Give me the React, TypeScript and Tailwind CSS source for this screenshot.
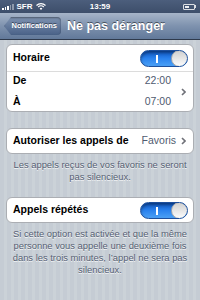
import React from "react";

function Toggle() {
  return (
    <div className="relative w-[48px] h-[17px] rounded-full border border-[#1d4f9c] bg-gradient-to-b from-[#0f56c0] via-[#2a82ee] to-[#4ba0f5] shadow-[inset_0_2px_3px_rgba(0,0,0,0.35)] overflow-hidden">
      <div className="absolute left-[15px] top-[4px] w-[2px] h-[8px] bg-white" />
      <div className="absolute right-[-1px] top-[-1px] w-[17px] h-[17px] rounded-full border border-[#a8a8a8] bg-gradient-to-b from-[#d0d0d0] to-[#fcfcfc]" />
    </div>
  );
}

function Chevron() {
  return (
    <svg width="5" height="8" viewBox="0 0 5 8" className="shrink-0">
      <path d="M1 1 L4 4 L1 7" fill="none" stroke="#6f7178" strokeWidth="1.6" />
    </svg>
  );
}

function Footer({ children }: { children: React.ReactNode }) {
  return (
    <p className="px-[12px] pt-[5px] text-center text-[9.4px] leading-[12px] text-[#565f73] [text-shadow:0_1px_0_rgba(255,255,255,0.8)]">
      {children}
    </p>
  );
}

export default function App() {
  return (
    <div className="w-[200px] h-[300px] overflow-hidden font-['Liberation_Sans',Arial,sans-serif] bg-[repeating-linear-gradient(90deg,#c5ccd4_0px,#c5ccd4_4px,#cbd2d8_4px,#cbd2d8_7px)]">
      {/* Status bar */}
      <div className="h-[13px] flex items-center justify-between px-[2px] bg-gradient-to-b from-[#4c5e7c] to-[#3d4e6a] text-white text-[8px] font-bold">
        <div className="flex items-center gap-[3px] w-[60px]">
          <div className="flex items-end gap-[1px] h-[6px]">
            <span className="w-[1.5px] h-[2px] bg-white" />
            <span className="w-[1.5px] h-[3px] bg-white" />
            <span className="w-[1.5px] h-[4px] bg-white" />
            <span className="w-[1.5px] h-[5px] bg-white/40" />
            <span className="w-[1.5px] h-[6px] bg-white/40" />
          </div>
          <span className="leading-none">SFR</span>
          <svg width="10" height="7" viewBox="0 0 10 7">
            <path d="M0.5 2.5 A6.5 6.5 0 0 1 9.5 2.5" fill="none" stroke="white" strokeWidth="1.2" />
            <path d="M2.2 4 A4 4 0 0 1 7.8 4" fill="none" stroke="white" strokeWidth="1.2" />
            <path d="M5 7 L3.6 5.4 A2 2 0 0 1 6.4 5.4 Z" fill="white" />
          </svg>
        </div>
        <span className="leading-none">13:59</span>
        <div className="w-[60px] flex justify-end pr-[2px]">
          <div className="flex items-center">
            <div className="w-[12px] h-[6px] border border-white/80 rounded-[1px] p-[1px]">
              <div className="w-[4px] h-full bg-white/90" />
            </div>
            <div className="w-[1px] h-[3px] bg-white/80" />
          </div>
        </div>
      </div>

      {/* Nav bar */}
      <div className="h-[27px] flex items-center px-[4px] gap-[6px] bg-gradient-to-b from-[#a6b4c8] via-[#7e92ae] to-[#62799a] border-b border-[#2f3a4c]">
        <div className="h-[18px] w-[57px] flex items-center justify-end pr-[4px] bg-gradient-to-b from-[#7f93b1] to-[#4a6288] [clip-path:polygon(0_50%,7px_0,100%_0,100%_100%,7px_100%)] rounded-r-[4px] shadow-[inset_0_1px_2px_rgba(0,0,0,0.4)]">
          <span className="text-[7.5px] font-bold text-white [text-shadow:0_-1px_0_rgba(0,0,0,0.5)]">Notifications</span>
        </div>
        <span className="text-[12.5px] font-bold text-white [text-shadow:0_-1px_0_rgba(0,0,0,0.5)]">Ne pas déranger</span>
      </div>

      {/* Group 1 */}
      <div className="mx-[6px] mt-[4px] bg-white rounded-[6px] border border-[#abaeb3]">
        <div className="h-[27px] flex items-center justify-between pl-[6px] pr-[5px] border-b border-[#dcdcdc]">
          <span className="text-[10.5px] font-bold text-black">Horaire</span>
          <Toggle />
        </div>
        <div className="h-[39px] flex items-center pl-[6px] pr-[7px]">
          <div className="flex-1 flex flex-col gap-[5px]">
            <div className="flex justify-between">
              <span className="text-[10.5px] font-bold text-black">De</span>
              <span className="text-[10.5px] text-[#4f5b70] pr-[10px]">22:00</span>
            </div>
            <div className="flex justify-between">
              <span className="text-[10.5px] font-bold text-black">À</span>
              <span className="text-[10.5px] text-[#4f5b70] pr-[10px]">07:00</span>
            </div>
          </div>
          <Chevron />
        </div>
      </div>

      {/* Group 2 */}
      <div className="mx-[6px] mt-[16px] h-[26px] flex items-center justify-between pl-[6px] pr-[7px] bg-white rounded-[6px] border border-[#abaeb3]">
        <span className="text-[10.5px] font-bold text-black">Autoriser les appels de</span>
        <div className="flex items-center gap-[5px]">
          <span className="text-[10.5px] text-[#4f5b70]">Favoris</span>
          <Chevron />
        </div>
      </div>
      <Footer>Les appels reçus de vos favoris ne seront pas silencieux.</Footer>

      {/* Group 3 */}
      <div className="mx-[6px] mt-[14px] h-[26px] flex items-center justify-between pl-[6px] pr-[5px] bg-white rounded-[6px] border border-[#abaeb3]">
        <span className="text-[10.5px] font-bold text-black">Appels répétés</span>
        <Toggle />
      </div>
      <Footer>
        Si cette option est activée et que la même personne vous appelle une deuxième fois dans les trois minutes, l’appel ne sera pas silencieux.
      </Footer>
    </div>
  );
}
